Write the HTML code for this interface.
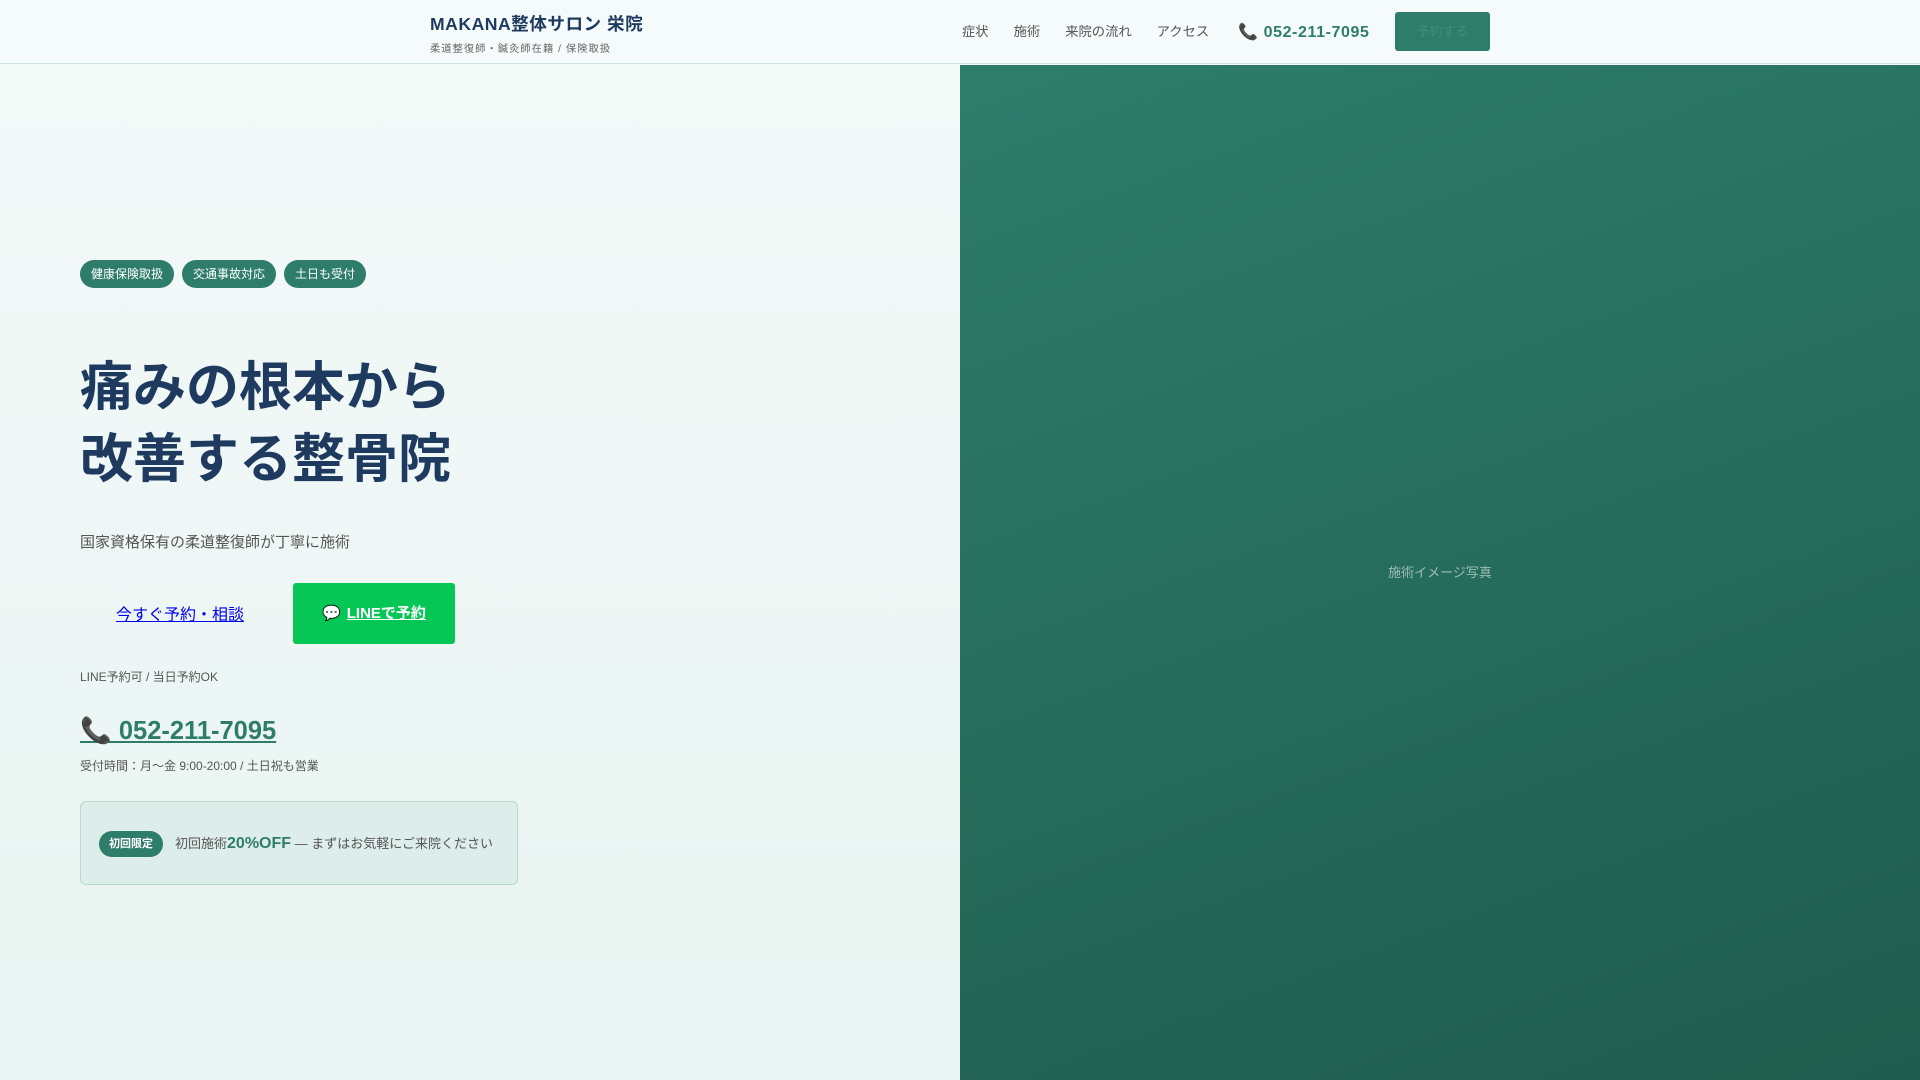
<!DOCTYPE html>
<html><head><meta charset="utf-8"><style>
*{margin:0;padding:0;box-sizing:border-box}
body{width:1920px;height:1080px;overflow:hidden;font-family:"Liberation Sans","Noto Sans CJK JP",sans-serif;background:linear-gradient(180deg,#f4faf9,#e8f4f1);position:relative}
header{position:absolute;left:0;top:0;width:1920px;height:64px;background:#f5fafa;border-bottom:1px solid #cfe3df}
.logo{position:absolute;left:430px;top:11px;font-size:17.6px;font-weight:bold;color:#1e3a5f;letter-spacing:.5px}
.sub{position:absolute;left:430px;top:40px;font-size:10.3px;color:#666;letter-spacing:1px}
nav{position:absolute;left:962px;top:21px;font-size:13.3px;color:#555;display:flex;gap:0}
nav span{margin-right:25px}
.tel{position:absolute;left:1238px;top:22px;font-size:16px;font-weight:bold;color:#2e7d6b;letter-spacing:.6px}
.btn{position:absolute;left:1395px;top:12px;width:95px;height:39px;background:#2e7d6b;border-radius:3px;color:#3e8e7b;font-size:13px;text-align:center;line-height:39px}
.right{position:absolute;left:960px;top:65px;width:960px;height:1015px;background:linear-gradient(160deg,#2e7d6b,#1f5c4d)}
.right span{position:absolute;left:0;width:100%;top:497px;text-align:center;font-size:13px;color:rgba(255,255,255,.55)}
.badges{position:absolute;left:80px;top:260px;display:flex;gap:8px}
.badges span{background:#2e7d6b;color:#fff;font-size:12px;height:28px;line-height:28px;padding:0 11px;border-radius:14px}
h1{position:absolute;left:80px;top:352px;font-size:53px;line-height:72px;color:#1e3a5f;font-weight:bold}
.lead{position:absolute;left:80px;top:531px;font-size:15px;color:#555}
.link{position:absolute;left:116px;top:601px;font-size:16px;color:#0000ee;text-decoration:underline}
.line{position:absolute;left:293px;top:583px;width:162px;height:61px;background:#06c755;border-radius:3px;color:#fff;font-size:15px;font-weight:bold;text-align:center;line-height:61px}
.line u{margin-left:6px}
.ok{position:absolute;left:80px;top:668px;font-size:12px;color:#555}
.ph{position:absolute;left:80px;top:716px;font-size:25.5px;font-weight:bold;color:#2e7d6b;text-decoration:underline}
.hrs{position:absolute;left:80px;top:757px;font-size:12px;color:#555}
.box{position:absolute;left:80px;top:801px;width:438px;height:84px;background:#ddedea;border:1px solid #b5d8cf;border-radius:6px}
.box .tag{position:absolute;left:18px;top:29px;background:#2e7d6b;color:#fff;font-size:11px;font-weight:bold;height:26px;line-height:26px;padding:0 10px;border-radius:13px}
.box .t{position:absolute;left:94px;top:31px;font-size:13px;color:#555;white-space:nowrap}
.box b{color:#2e7d6b;font-size:16px}
</style></head><body>
<header>
<div class="logo">MAKANA整体サロン 栄院</div>
<div class="sub">柔道整復師・鍼灸師在籍 / 保険取扱</div>
<nav><span>症状</span><span>施術</span><span>来院の流れ</span><span>アクセス</span></nav>
<div class="tel">📞 052-211-7095</div>
<div class="btn">予約する</div>
</header>
<div class="right"><span>施術イメージ写真</span></div>
<div class="badges"><span>健康保険取扱</span><span>交通事故対応</span><span>土日も受付</span></div>
<h1>痛みの根本から<br>改善する整骨院</h1>
<div class="lead">国家資格保有の柔道整復師が丁寧に施術</div>
<a class="link">今すぐ予約・相談</a>
<div class="line">💬<u>LINEで予約</u></div>
<div class="ok">LINE予約可 / 当日予約OK</div>
<div class="ph">📞 052-211-7095</div>
<div class="hrs">受付時間：月〜金 9:00-20:00 / 土日祝も営業</div>
<div class="box"><span class="tag">初回限定</span><span class="t">初回施術<b>20%OFF</b> — まずはお気軽にご来院ください</span></div>
</body></html>
